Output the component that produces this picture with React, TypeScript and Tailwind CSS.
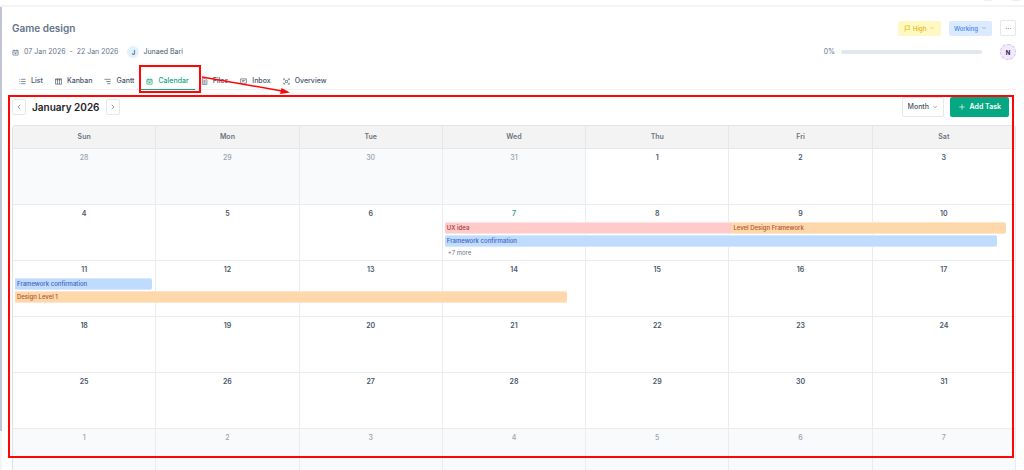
import { useState } from 'react';
import type { ReactNode } from 'react';
import { ChevronDown, ChevronLeft, ChevronRight, Plus } from 'lucide-react';

interface CalendarEvent {
  title: string;
  start: number;
  lane: number;
  // length in day columns, can be a part of a day
  span: number;
  className: string;
}

interface Day {
  date: number;
  inMonth: boolean;
  key: string;
}

const WEEKDAYS = ['Sun', 'Mon', 'Tue', 'Wed', 'Thu', 'Fri', 'Sat'];

const RED = 'bg-[#fecaca] text-[#a33a3a] border-[#fde0e0]';
const ORANGE = 'bg-[#fed7aa] text-[#b0552c] border-[#fee6ca]';
const BLUE = 'bg-[#bfdbfe] text-[#3f62bd] border-[#d6e8fe]';

const EVENTS: CalendarEvent[] = [
  { title: 'UX idea', start: 7, lane: 0, span: 2.02, className: `${RED} rounded-l-xs` },
  { title: 'Level Design Framework', start: 9, lane: 0, span: 1.93, className: `${ORANGE} rounded-r-xs` },
  { title: 'Framework confirmation', start: 7, lane: 1, span: 3.88, className: `${BLUE} rounded-xs` },
  { title: 'Framework confirmation', start: 11, lane: 0, span: 0.96, className: `${BLUE} rounded-r-xs` },
  { title: 'Design Level 1', start: 11, lane: 1, span: 3.88, className: `${ORANGE} rounded-r-xs` },
];

function buildWeeks(): Day[][] {
  const first = new Date(2026, 0, 1);
  const weeks: Day[][] = [];
  for (let w = 0; w < 6; w++) {
    const week: Day[] = [];
    for (let d = 0; d < 7; d++) {
      const day = new Date(2026, 0, 1 - first.getDay() + w * 7 + d);
      week.push({
        date: day.getDate(),
        inMonth: day.getMonth() === 0,
        key: `${day.getMonth()}-${day.getDate()}`,
      });
    }
    weeks.push(week);
  }
  return weeks;
}

function Icon({ children }: { children: ReactNode }) {
  return (
    <svg
      viewBox="0 0 16 16"
      className="size-[7px] shrink-0"
      fill="none"
      stroke="currentColor"
      strokeWidth="1.5"
      aria-hidden="true"
    >
      {children}
    </svg>
  );
}

const calendarPaths = (
  <>
    <path d="M2 3.5h12v10.5H2zM2 7h12M5 1v4M11 1v4" />
    <path d="M5.5 10.5h5M8 9v3" />
  </>
);

const TABS = [
  { name: 'List', icon: <path d="M5 3h10M5 8h10M5 13h10M1 3h2M1 8h2M1 13h2" /> },
  { name: 'Kanban', icon: <path d="M1 2h14v12H1zM5.7 2v12M10.3 2v12M1 4h14" /> },
  { name: 'Gantt', icon: <path d="M1 3h14M5 8h10M7 13h8" /> },
  { name: 'Calendar', icon: calendarPaths },
  { name: 'Files', icon: <path d="M3 1.5h7l3.5 3.5v9.5H3zM5.5 6h5M5.5 8.7h5M5.5 11.5h5" /> },
  { name: 'Inbox', icon: <path d="M1.5 2h13v10H10l-2 2.5L6 12H1.5zM4.5 5.5h7M4.5 8.5h5" /> },
  {
    name: 'Overview',
    icon: (
      <>
        <path d="M1.5 5V2H5M11 2h3.5v3M14.5 11v3H11M5 14H1.5v-3" />
        <circle cx="8" cy="8" r="2.5" />
        <path d="M3.5 4l2.5 2M12.5 4L10 6M3.5 12L6 10M12.5 12L10 10" />
      </>
    ),
  },
];

function ProjectHeader() {
  return (
    <header className="flex justify-between pt-[13px]">
      <div>
        <h1 className="text-[10px] leading-4 font-semibold text-[#64748b]">Game design</h1>
        <div className="mt-2 flex h-4 items-center text-[7px] text-[#64748b]">
          <Icon>{calendarPaths}</Icon>
          <span className="ml-[5px]">07 Jan 2026 &nbsp;-&nbsp; 22 Jan 2026</span>
          <span className="ml-[9px] flex size-3 items-center justify-center rounded-full bg-[#e0f2fe] text-[6px] font-semibold text-[#475569]">
            J
          </span>
          <span className="ml-1 text-[#475569]">Junaed Bari</span>
        </div>
      </div>
      <div className="flex flex-col gap-2">
        <div className="flex items-center justify-end gap-2">
          <label className="flex h-[15px] items-center gap-0.5 rounded-xs bg-[#fef9c3] px-1.5 text-[#eab308]">
            <Icon>
              <path d="M2.5 15V2h11l-2.5 4 2.5 4h-11" />
            </Icon>
            <select aria-label="Priority" className="w-3.5 appearance-none text-[6px] font-medium">
              <option>High</option>
            </select>
            <ChevronDown className="size-1.5" />
          </label>
          <label className="flex h-[15px] items-center gap-0.5 rounded-xs bg-[#dbeafe] px-[5px] text-[#3b82f6]">
            <select aria-label="Status" className="w-[25px] appearance-none text-[6px] font-medium">
              <option>Working</option>
            </select>
            <ChevronDown className="size-1.5" />
          </label>
          <button
            type="button"
            aria-label="More"
            className="flex size-4 items-center justify-center rounded-xs border border-[#e5e7eb] text-[#64748b]"
          >
            <Icon>
              <path d="M2 8h2.5M6.7 8h2.5M11.5 8H14" />
            </Icon>
          </button>
        </div>
        <div className="flex items-center justify-end text-[#64748b]">
          <span className="text-[7px]">0%</span>
          <div
            role="progressbar"
            aria-label="Progress"
            aria-valuenow={0}
            className="mr-[18px] ml-1.5 h-1 w-[141px] rounded-full bg-[#e2e8f0]"
          />
          <span className="flex size-4 items-center justify-center rounded-full border border-dashed border-[#d0c4e0] bg-[#f3e8ff] text-[6px] font-bold text-[#1e293b]">
            N
          </span>
        </div>
      </div>
    </header>
  );
}

function Tabs({ active, onSelect }: { active: string; onSelect: (name: string) => void }) {
  return (
    <nav className="mt-[13px] flex border-b border-[#f1f1f3] pl-px">
      {TABS.map(tab => (
        <button
          key={tab.name}
          type="button"
          onClick={() => onSelect(tab.name)}
          className={`-mb-px flex h-[17px] items-center gap-[5px] border-b px-1.5 text-[7px] font-medium ${
            tab.name === active ? 'border-[#10a981] text-[#10a981]' : 'border-transparent text-[#475569]'
          }`}
        >
          <Icon>{tab.icon}</Icon>
          {tab.name}
        </button>
      ))}
    </nav>
  );
}

function Toolbar() {
  const arrow =
    'flex h-4 w-3.5 items-center justify-center rounded-xs border border-[#e5e7eb] bg-white text-[#64748b]';
  return (
    <div className="flex items-center justify-between pt-[7px] pr-[7px] pb-2">
      <div className="flex items-center gap-1.5">
        <button type="button" aria-label="Previous month" className={arrow}>
          <ChevronLeft className="size-2" />
        </button>
        <h2 className="text-[10px] leading-4 font-semibold text-[#1f2328]">January 2026</h2>
        <button type="button" aria-label="Next month" className={arrow}>
          <ChevronRight className="size-2" />
        </button>
      </div>
      <div className="flex gap-1.5">
        <label className="flex h-5 items-center rounded-xs border border-[#e5e7eb] px-[5px] text-[#4b5563]">
          <select aria-label="View" className="w-6 appearance-none text-[7px] font-medium">
            <option>Month</option>
          </select>
          <ChevronDown className="size-1.5" />
        </label>
        <button
          type="button"
          className="flex h-5 items-center gap-1 rounded-xs bg-[#05a882] px-2 text-[7px] font-semibold text-white"
        >
          <Plus className="size-2" />
          Add Task
        </button>
      </div>
    </div>
  );
}

function EventBar({ event }: { event: CalendarEvent }) {
  return (
    <div
      className={`absolute left-0.5 z-10 flex h-3 items-center overflow-hidden border-y px-0.5 text-left text-[6px] font-medium whitespace-nowrap ${
        event.lane === 0 ? 'top-[17px]' : 'top-[30px]'
      } ${event.className}`}
      style={{ width: `${event.span * 100}%` }}
    >
      {event.title}
    </div>
  );
}

function MonthTable() {
  const weeks = buildWeeks();

  return (
    <table className="w-full table-fixed border-separate border-spacing-0 rounded-t-sm border-t border-l border-[#dfe2e6]">
      <thead>
        <tr>
          {WEEKDAYS.map(name => (
            <th
              key={name}
              className="h-[23px] border-r border-b border-[#e5e7eb] bg-[#f3f3f4] p-0 pt-px text-[7px] font-semibold text-[#6b7280]"
            >
              {name}
            </th>
          ))}
        </tr>
      </thead>
      <tbody>
        {weeks.map(week => (
          <tr key={week[0].key}>
            {week.map(day => (
              <td
                key={day.key}
                className={`relative h-14 border-r border-b border-[#ebecef] p-0 pt-[5px] text-center align-top text-[7px] leading-2 ${
                  day.inMonth ? 'font-semibold text-[#475569]' : 'bg-[#f9fafb] font-medium text-[#9ca3af]'
                }`}
              >
                <span className={day.inMonth && day.date === 7 ? 'text-[#2a9d8a]' : ''}>{day.date}</span>
                {day.inMonth &&
                  EVENTS.filter(e => e.start === day.date).map(e => (
                    <EventBar key={e.title} event={e} />
                  ))}
                {day.inMonth && day.date === 7 && (
                  <a href="#more" className="absolute top-11 left-[5px] text-[6px] font-normal text-[#6b7280]">
                    +7 more
                  </a>
                )}
              </td>
            ))}
          </tr>
        ))}
      </tbody>
    </table>
  );
}

function Annotations() {
  return (
    <div className="pointer-events-none absolute inset-0 z-20">
      <div className="absolute top-[65px] left-[139px] h-7 w-[62px] border-2 border-[#ff0505]" />
      <div className="absolute top-[95px] right-2.5 bottom-3 left-2 border-2 border-[#ff0505]" />
      <svg className="absolute top-[70px] left-[200px] h-7 w-24" viewBox="0 0 96 28" aria-hidden="true">
        <path d="M2 7L82 21" stroke="#ff0505" strokeWidth="1.5" />
        <path d="M90 22.5L80 24L81.5 18Z" fill="#ff0505" />
      </svg>
    </div>
  );
}

export default function App() {
  const [activeTab, setActiveTab] = useState('Calendar');

  return (
    <div className="relative flex h-screen flex-col overflow-hidden bg-white font-['Inter',sans-serif]">
      <div className="flex h-[7px] shrink-0 items-start justify-end gap-5 border-b-2 border-[#f3f4f6] pr-1">
        <span className="h-px w-2 bg-[#eeeff1]" />
        <span className="h-px w-2 bg-[#eeeff1]" />
      </div>
      <div className="flex min-h-0 flex-1">
        <div className="w-0.5 shrink-0 bg-[#f3f4f6]">
          <div className="h-11/12 bg-[#c1c5d3]" />
        </div>
        <main className="min-w-0 flex-1 overflow-hidden pr-2 pl-2.5">
          <ProjectHeader />
          <Tabs active={activeTab} onSelect={setActiveTab} />
          <Toolbar />
          <MonthTable />
        </main>
      </div>
      <Annotations />
    </div>
  );
}
